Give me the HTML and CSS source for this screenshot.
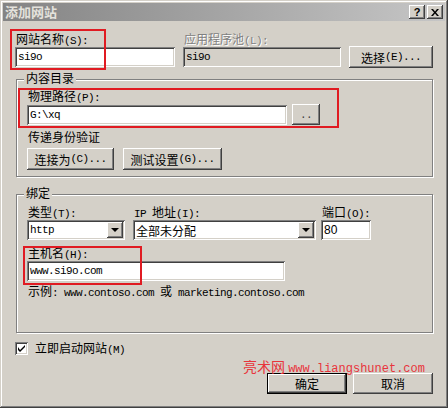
FILE: index.html
```html
<!DOCTYPE html>
<html lang="zh-CN">
  <head>
    <meta charset="UTF-8" />
    <title>添加网站</title>
    <link rel="stylesheet" href="styles.css">
  </head>
  <body>
    <div class="window">
      <div class="titlebar">
        <span class="title">添加网站</span>
        <div class="caption">
          <span class="cap-btn help">?</span>
          <span class="cap-btn">
            <svg width="8" height="7" viewBox="0 0 8 7"><path d="M0 0h2l2 2.5L6 0h2L5 3.5 8 7H6L4 4.5 2 7H0l3-3.5z" fill="#000"/></svg>
          </span>
        </div>
      </div>

      <div class="panel">
        <div class="row site">
          <div class="field name">
            <p class="label">网站名称<span class="en">(S):</span></p>
            <div class="edit"><span class="en">si9o</span></div>
          </div>
          <div class="field pool">
            <p class="label disabled">应用程序池<span class="en">(L):</span></p>
            <div class="edit readonly"><span class="en">si9o</span></div>
          </div>
          <div class="btn choose">选择<span class="en">(E)...</span></div>
        </div>

        <div class="group content">
          <p class="legend">内容目录</p>
          <p class="label path-label">物理路径<span class="en">(P):</span></p>
          <div class="row path">
            <div class="edit"><span class="en">G:\xq</span></div>
            <div class="btn browse"><span class="en">..</span></div>
          </div>
          <p class="label auth-label">传递身份验证</p>
          <div class="row auth">
            <div class="btn connect">连接为<span class="en">(C)...</span></div>
            <div class="btn test">测试设置<span class="en">(G)...</span></div>
          </div>
        </div>

        <div class="group binding">
          <p class="legend">绑定</p>
          <div class="row bind">
            <div class="field type">
              <p class="label">类型<span class="en">(T):</span></p>
              <div class="combo"><span class="en">http</span><span class="drop"></span></div>
            </div>
            <div class="field ip">
              <p class="label"><span class="en">IP </span>地址<span class="en">(I):</span></p>
              <div class="combo">全部未分配<span class="drop"></span></div>
            </div>
            <div class="field port">
              <p class="label">端口<span class="en">(O):</span></p>
              <div class="edit num">80</div>
            </div>
          </div>
          <p class="label host-label">主机名<span class="en">(H):</span></p>
          <div class="edit host"><span class="en">www.si9o.com</span></div>
          <p class="label hint">示例<span class="en">: www.contoso.com </span>或<span class="en"> marketing.contoso.com</span></p>
        </div>

        <div class="check-row">
          <span class="checkbox">
            <svg width="7" height="7" viewBox="0 0 7 7"><path d="M0 2v3l2 2 5-5V-0L2 5z" fill="#000"/></svg>
          </span>
          <span class="label">立即启动网站<span class="en">(M)</span></span>
        </div>

        <div class="row actions">
          <div class="btn default">确定</div>
          <div class="btn">取消</div>
        </div>
      </div>

      <!-- annotations drawn over the dialog -->
      <div class="mark mark-name"></div>
      <div class="mark mark-path"></div>
      <div class="mark mark-host"></div>
      <p class="watermark">亮术网 <span>www.liangshunet.com</span></p>
    </div>
  </body>
</html>
```

FILE: styles.css
```css
* {
  box-sizing: border-box;
}

body {
  margin: 0;
  background: #d4d0c8;
}

p {
  margin: 0;
}

.window {
  position: relative;
  width: 448px;
  height: 408px;
  padding: 3px;
  background: #d4d0c8;
  color: #000;
  font-family: "Noto Sans CJK SC", sans-serif;
  font-size: 12px;
  box-shadow: inset -1px -1px #404040, inset 1px 1px #d4d0c8,
    inset -2px -2px #808080, inset 2px 2px #fff;
}

.en {
  font-family: "Liberation Mono", monospace;
  font-size: 11px;
  letter-spacing: -0.6px;
}

/* title bar */

.titlebar {
  display: flex;
  align-items: center;
  justify-content: space-between;
  height: 18px;
  padding: 0 2px 0 2px;
  background: linear-gradient(to right, #848484, #c6c6c6);
}

.title {
  color: #e4e2dc;
  font-size: 13px;
  font-weight: bold;
  line-height: 14px;
}

.caption {
  display: flex;
  gap: 2px;
}

.cap-btn {
  display: flex;
  align-items: center;
  justify-content: center;
  width: 16px;
  height: 14px;
  background: #d4d0c8;
  box-shadow: inset -1px -1px #404040, inset 1px 1px #fff,
    inset -2px -2px #808080;
}

.help {
  font-family: "Liberation Sans", sans-serif;
  font-weight: bold;
  font-size: 11px;
}

/* layout */

.panel {
  padding: 10px 12px 0;
}

.row {
  display: flex;
}

.label {
  height: 16px;
  line-height: 16px;
  padding-left: 1px;
  white-space: nowrap;
}

.label.disabled {
  color: #808080;
  text-shadow: 1px 1px #fff;
}

.edit,
.combo {
  display: flex;
  align-items: center;
  height: 20px;
  padding: 0 3px;
  background: #fff;
  box-shadow: inset 1px 1px #808080, inset -1px -1px #fff,
    inset 2px 2px #404040, inset -2px -2px #d4d0c8;
  white-space: nowrap;
}

.edit.readonly {
  background: #d4d0c8;
}

.edit.num {
  font-family: "Liberation Sans", sans-serif;
}

.btn {
  display: flex;
  align-items: center;
  justify-content: center;
  height: 22px;
  background: #d4d0c8;
  box-shadow: inset -1px -1px #404040, inset 1px 1px #fff,
    inset -2px -2px #808080;
  white-space: nowrap;
}

.btn.default {
  border: 1px solid #000;
}

/* site name row */

.site {
  align-items: flex-end;
  gap: 8px;
}

.name {
  width: 160px;
}

.pool {
  width: 158px;
}

.choose {
  width: 84px;
  margin-bottom: -1px;
}

/* group boxes */

.group {
  margin-left: 1px;
  padding: 0 9px 0 10px;
  border: 1px solid #808080;
  box-shadow: inset 1px 1px #fff, 1px 1px #fff;
}

.legend {
  width: fit-content;
  height: 14px;
  margin: -9px 0 0 -3px;
  padding: 0 2px;
  line-height: 14px;
  background: #d4d0c8;
}

.content {
  margin-top: 12px;
  padding-bottom: 6px;
}

.path-label {
  margin-top: 3px;
}

.path {
  align-items: center;
  gap: 5px;
}

.path .edit {
  width: 260px;
}

.browse {
  width: 28px;
  height: 21px;
  color: #404040;
}

.auth-label {
  margin-top: 4px;
}

.auth {
  margin-top: 3px;
  gap: 9px;
}

.connect {
  width: 87px;
}

.test {
  width: 99px;
}

.binding {
  margin-top: 17px;
  padding-bottom: 33px;
}

.bind {
  margin-top: 4px;
}

.type {
  width: 98px;
  margin-right: 8px;
}

.ip {
  width: 183px;
  margin-right: 5px;
}

.port {
  width: 50px;
}

.combo {
  padding-right: 2px;
}

.drop {
  position: relative;
  width: 16px;
  height: 16px;
  margin-left: auto;
  background: #d4d0c8;
  box-shadow: inset -1px -1px #404040, inset 1px 1px #fff,
    inset -2px -2px #808080;
}

.drop::after {
  content: "";
  position: absolute;
  top: 6px;
  left: 4px;
  border-top: 4px solid #000;
  border-left: 4px solid transparent;
  border-right: 4px solid transparent;
}

.host-label {
  margin-top: 5px;
}

.host {
  width: 258px;
}

.hint {
  margin-top: 2px;
}

/* bottom */

.check-row {
  display: flex;
  align-items: center;
  gap: 6px;
  margin-top: 7px;
}

.checkbox {
  display: flex;
  align-items: center;
  justify-content: center;
  width: 13px;
  height: 13px;
  background: #fff;
  box-shadow: inset 1px 1px #808080, inset -1px -1px #fff,
    inset 2px 2px #404040, inset -2px -2px #d4d0c8;
}

.actions {
  justify-content: flex-end;
  gap: 6px;
  margin-top: 17px;
}

.actions .btn {
  width: 80px;
  height: 21px;
}

/* annotations */

.mark {
  position: absolute;
  border: 2px solid #e01b22;
}

.mark-name {
  top: 29px;
  left: 10px;
  width: 96px;
  height: 41px;
}

.mark-path {
  top: 88px;
  left: 18px;
  width: 321px;
  height: 40px;
}

.mark-host {
  top: 246px;
  left: 23px;
  width: 119px;
  height: 39px;
}

.watermark {
  position: absolute;
  top: 357px;
  left: 243px;
  color: #e8343c;
  font-size: 14px;
  line-height: 18px;
  white-space: nowrap;
}

.watermark span {
  font-family: "Liberation Mono", monospace;
  font-size: 12px;
}
```
